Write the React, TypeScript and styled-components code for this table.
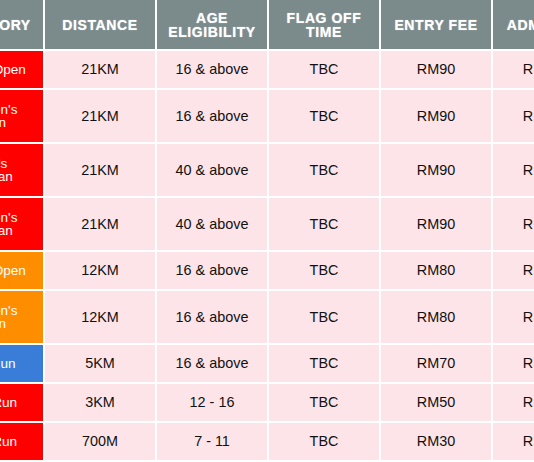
import styled, { createGlobalStyle } from 'styled-components';

const GlobalStyle = createGlobalStyle`
    html, body {
        margin: 0;
        padding: 0;
        background: #ffffff;
        overflow: hidden;
    }
    body {
        font-family: 'Liberation Sans', Arial, sans-serif;
    }
`;

const Viewport = styled.div`
    width: 534px;
    height: 462px;
    overflow: hidden;
    background: #ffffff;
`;

// the table is wider than the view, the category column is scrolled off to the left
const Table = styled.div<{ $rows: string }>`
    display: grid;
    grid-template-columns: 107px repeat(5, 110px);
    grid-template-rows: ${(p) => p.$rows};
    gap: 2px;
    width: max-content;
    margin-left: -64px;
    background: #ffffff;
`;

const HeadCell = styled.div`
    display: flex;
    align-items: center;
    justify-content: center;
    box-sizing: border-box;
    padding: 0 6px;
    background: #7b8b8b;
    color: #ffffff;
    font-size: 14px;
    font-weight: 700;
    line-height: 14px;
    letter-spacing: 0.6px;
    text-align: center;
    text-transform: uppercase;
    text-shadow: 0 0 1px rgba(255, 255, 255, 0.7);
`;

const CategoryCell = styled.div<{ $tone: string }>`
    display: flex;
    align-items: center;
    justify-content: center;
    box-sizing: border-box;
    padding: 0 16px;
    background: ${(p) => p.$tone};
    color: #ffffff;
    font-size: 13.6px;
    line-height: 13px;
    text-align: center;
`;

const Cell = styled.div`
    display: flex;
    align-items: center;
    justify-content: center;
    box-sizing: border-box;
    padding: 0 6px;
    background: #fde4e8;
    color: #111111;
    font-size: 14.4px;
    line-height: 17px;
    text-align: center;
`;

const tones = {
    red: '#fe0000',
    orange: '#fe8d00',
    blue: '#3a7dd9',
};

const headers = ['Category', 'Distance', 'Age Eligibility', 'Flag Off Time', 'Entry Fee', 'Admin Fee'];

const races = [
    { category: "Men's Open", tone: tones.red, distance: '21KM', age: '16 & above', fee: 'RM90', tall: false },
    { category: "Women's Open", tone: tones.red, distance: '21KM', age: '16 & above', fee: 'RM90', tall: true },
    { category: "Men's Veteran", tone: tones.red, distance: '21KM', age: '40 & above', fee: 'RM90', tall: true },
    { category: "Women's Veteran", tone: tones.red, distance: '21KM', age: '40 & above', fee: 'RM90', tall: true },
    { category: "Men's Open", tone: tones.orange, distance: '12KM', age: '16 & above', fee: 'RM80', tall: false },
    { category: "Women's Open", tone: tones.orange, distance: '12KM', age: '16 & above', fee: 'RM80', tall: true },
    { category: 'Fun Run', tone: tones.blue, distance: '5KM', age: '16 & above', fee: 'RM70', tall: false },
    { category: 'Kids Run', tone: tones.red, distance: '3KM', age: '12 - 16', fee: 'RM50', tall: false },
    { category: 'Kids Run', tone: tones.red, distance: '700M', age: '7 - 11', fee: 'RM30', tall: false },
];

export default function App() {
    const rows = ['49px', ...races.map((r) => (r.tall ? '52px' : '37px'))].join(' ');

    return (
        <Viewport>
            <GlobalStyle />
            <Table $rows={rows}>
                {headers.map((h) => (
                    <HeadCell key={h}>{h}</HeadCell>
                ))}
                {races.map((race, i) => [
                    <CategoryCell key={`c${i}`} $tone={race.tone}>
                        {race.category}
                    </CategoryCell>,
                    <Cell key={`d${i}`}>{race.distance}</Cell>,
                    <Cell key={`a${i}`}>{race.age}</Cell>,
                    <Cell key={`t${i}`}>TBC</Cell>,
                    <Cell key={`f${i}`}>{race.fee}</Cell>,
                    <Cell key={`m${i}`}>RM2.50</Cell>,
                ])}
            </Table>
        </Viewport>
    );
}
